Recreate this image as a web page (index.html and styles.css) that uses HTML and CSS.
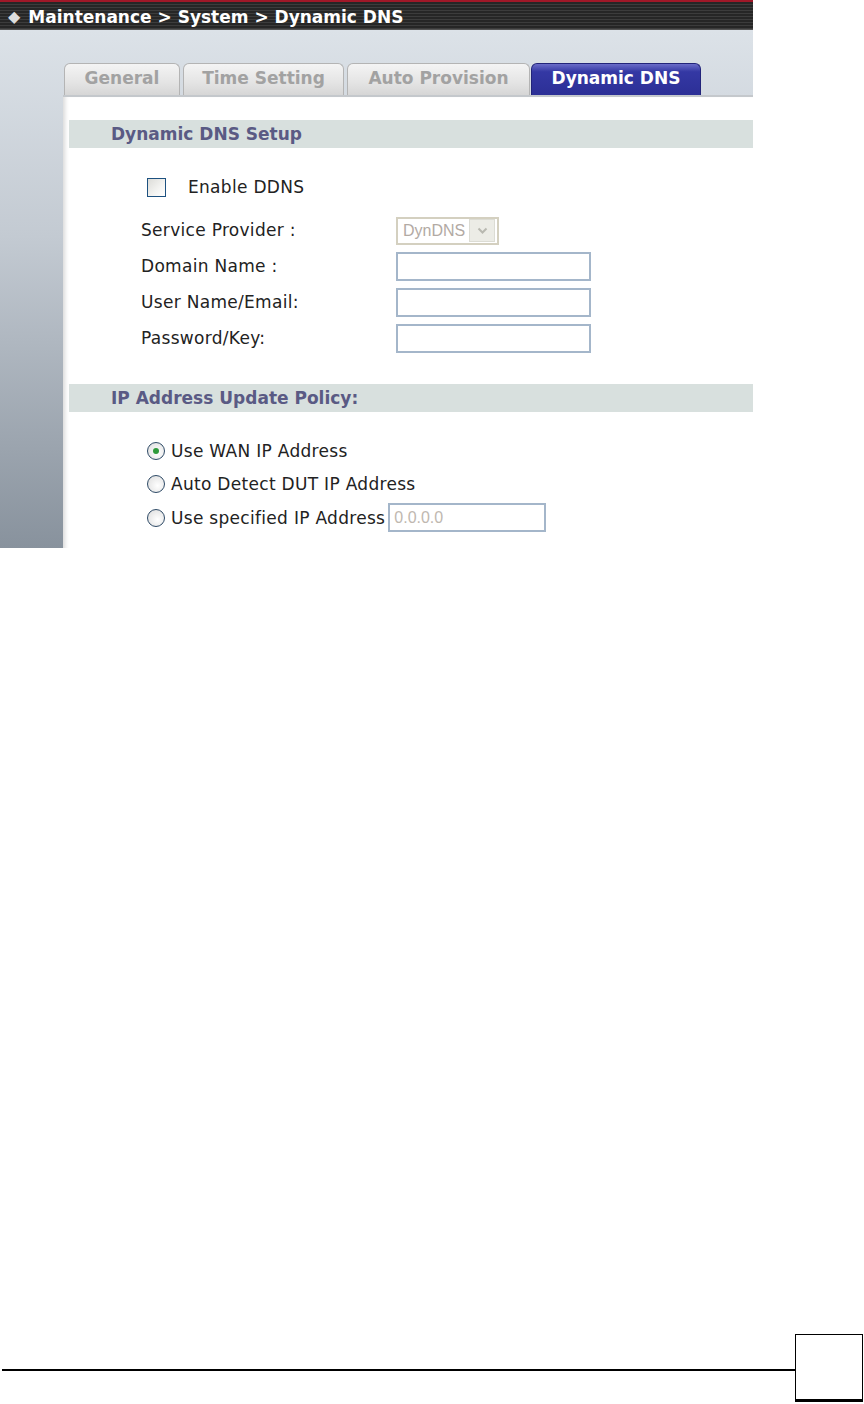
FILE: index.html
```html
<!DOCTYPE html>
<html lang="en">
<head>
  <meta charset="UTF-8">
  <title>Maintenance - Dynamic DNS</title>
  <link rel="stylesheet" href="styles.css">
</head>
<body>
  <div class="shot">
    <div class="topbar"><span class="dot">&#9670;</span>Maintenance &gt; System &gt; Dynamic DNS</div>
    <div class="main">
      <div class="content">
        <div class="tabs">
          <div class="tab tab-general">General</div>
          <div class="tab tab-time">Time Setting</div>
          <div class="tab tab-auto">Auto Provision</div>
          <div class="tab tab-ddns active">Dynamic DNS</div>
        </div>
        <div class="panel">
          <div class="band">Dynamic DNS Setup</div>
          <label class="enable"><input type="checkbox" class="chk"> <span>Enable DDNS</span></label>
          <div class="form">
            <div class="lbl">Service Provider :</div>
            <div class="select"><span class="sel-val">DynDNS</span><span class="sel-btn"><svg width="11" height="8" viewBox="0 0 11 8"><path d="M1.5 1.5 L5.5 5.5 L9.5 1.5" fill="none" stroke="#b8b8b0" stroke-width="2"/></svg></span></div>
            <div class="lbl">Domain Name :</div>
            <input type="text" class="txt">
            <div class="lbl">User Name/Email:</div>
            <input type="text" class="txt">
            <div class="lbl">Password/Key:</div>
            <input type="text" class="txt">
          </div>
          <div class="band band2">IP Address Update Policy:</div>
          <div class="radios">
            <label class="radio-row"><span class="radio on"></span>Use WAN IP Address</label>
            <label class="radio-row"><span class="radio"></span>Auto Detect DUT IP Address</label>
            <label class="radio-row"><span class="radio"></span>Use specified IP Address <input type="text" class="txt ip" placeholder="0.0.0.0"></label>
          </div>
        </div>
      </div>
    </div>
  </div>

  <div class="page-foot">
    <div class="rule"></div>
    <div class="pagebox"></div>
  </div>
</body>
</html>
```

FILE: styles.css
```css
body {
  margin: 0;
  background: #fff;
  font-family: "DejaVu Sans", Verdana, sans-serif;
  color: #222;
}
.shot {
  width: 753px;
  height: 548px;
  overflow: hidden;
}
.topbar {
  height: 30px;
  box-sizing: border-box;
  border-top: 2px solid #a01828;
  border-bottom: 1px solid #555;
  background: repeating-linear-gradient(to bottom, #262626 0, #262626 2px, #3c3c3c 2px, #3c3c3c 3px);
  color: #fff;
  font-weight: bold;
  font-size: 17px;
  line-height: 29px;
  padding-left: 8px;
  white-space: nowrap;
}
.dot {
  color: #ddd;
  font-size: 16px;
  margin-right: 8px;
  vertical-align: 1px;
}
.main {
  height: 518px;
  background: linear-gradient(to bottom, #dce2e8 0, #c3cad2 40%, #88929d 100%);
}
.content {
  margin-left: 63px;
  padding-top: 33px;
  height: 100%;
  box-sizing: border-box;
}
.tabs {
  display: flex;
  height: 32px;
  align-items: flex-end;
  padding-left: 1px;
  border-bottom: 2px solid #c4c8cc;
}
.tab {
  height: 32px;
  box-sizing: border-box;
  border: 1px solid #b4b4b4;
  border-bottom: none;
  border-radius: 6px 6px 0 0;
  background: linear-gradient(to bottom, #f4f4f4 0, #e4e4e4 60%, #d6d6d6 100%);
  color: #a2a2a2;
  font-weight: bold;
  font-size: 17px;
  text-align: center;
  line-height: 29px;
  margin-right: 3px;
  white-space: nowrap;
}
.tab-general { width: 116px; }
.tab-time { width: 161px; }
.tab-auto { width: 183px; margin-right: 1px; }
.tab-ddns { width: 170px; }
.tab.active {
  background: linear-gradient(to bottom, #6a6cc8 0, #3438a4 25%, #2c2f96 100%);
  border-color: #22247a;
  color: #fff;
}
.panel {
  background: #fff;
  height: 453px;
  box-shadow: inset 5px 0 4px -3px #d8d8d8;
  padding-top: 23px;
  padding-left: 6px;
  box-sizing: border-box;
}
.band {
  height: 28px;
  background: #d8e0de;
  color: #5a5a84;
  font-weight: bold;
  font-size: 17px;
  line-height: 29px;
  padding-left: 42px;
  white-space: nowrap;
}
.enable {
  display: flex;
  align-items: center;
  margin: 29px 0 0 78px;
  font-size: 17px;
  letter-spacing: 0.3px;
}
.chk {
  appearance: none;
  width: 19px;
  height: 19px;
  margin: 0 22px 0 0;
  border: 1px solid #1d5180;
  background: linear-gradient(135deg, #dcdcd8 0, #f4f4f2 60%, #fff 100%);
  box-sizing: border-box;
}
.form {
  display: grid;
  grid-template-columns: 255px 195px;
  row-gap: 7px;
  margin: 19px 0 0 72px;
  align-items: center;
  font-size: 17px;
  letter-spacing: 0.3px;
}
.lbl {
  line-height: 29px;
  white-space: nowrap;
}
.select {
  width: 103px;
  height: 28px;
  box-sizing: border-box;
  border: 2px solid #d4d0c0;
  background: #fff;
  display: flex;
  align-items: center;
  justify-content: space-between;
  padding: 0 2px 0 5px;
}
.sel-val {
  color: #b2aaa4;
  font-size: 16px;
  letter-spacing: 0;
  font-family: "Liberation Sans", Arial, sans-serif;
}
.sel-btn {
  width: 24px;
  height: 21px;
  background: #ecece6;
  border: 1px solid #dcdcd4;
  display: flex;
  align-items: center;
  justify-content: center;
}
.txt {
  width: 195px;
  height: 29px;
  box-sizing: border-box;
  border: 2px solid #a4b6ca;
  margin: 0;
  padding: 0 4px;
  background: #fff;
}
.band2 {
  margin-top: 31px;
}
.radios {
  margin: 22px 0 0 78px;
  font-size: 17px;
  letter-spacing: 0.3px;
}
.radio-row {
  display: flex;
  align-items: center;
  height: 33.5px;
  white-space: nowrap;
}
.radio {
  width: 18px;
  height: 18px;
  flex: none;
  box-sizing: border-box;
  border-radius: 50%;
  border: 1px solid #2e4a66;
  background: radial-gradient(circle at 60% 60%, #fff 0, #e6e6e6 70%, #cfcfcf 100%);
  margin-right: 6px;
  display: flex;
  align-items: center;
  justify-content: center;
}
.radio.on::after {
  content: "";
  width: 6px;
  height: 6px;
  border-radius: 50%;
  background: #2e9a3a;
}
.txt.ip {
  width: 158px;
  height: 29px;
  margin-left: 3px;
  font-family: "Liberation Sans", Arial, sans-serif;
  font-size: 16px;
  letter-spacing: 0;
}
.txt.ip::placeholder {
  color: #c0b8b0;
}
.page-foot {
  display: flex;
  align-items: flex-start;
  margin-top: 786px;
  padding-left: 2px;
}
.rule {
  width: 793px;
  height: 2px;
  background: #000;
  margin-top: 35px;
}
.pagebox {
  width: 68px;
  height: 68px;
  box-sizing: border-box;
  border: 1px solid #000;
  border-bottom: 3px solid #000;
}
```
